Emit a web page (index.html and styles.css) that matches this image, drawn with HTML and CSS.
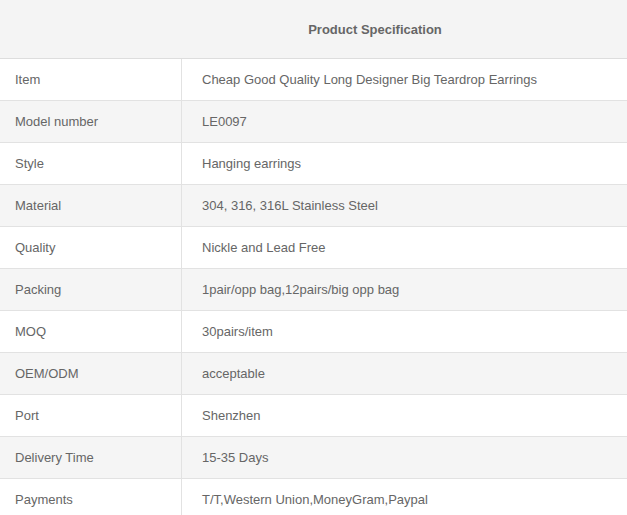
FILE: index.html
```html
<!DOCTYPE html>
<html>
<head>
<meta charset="utf-8">
<link rel="stylesheet" href="styles.css">
</head>
<body>
<table class="spec">
  <thead>
    <tr><th colspan="2">Product Specification</th></tr>
  </thead>
  <tbody>
    <tr><td class="k">Item</td><td class="v">Cheap Good Quality Long Designer Big Teardrop Earrings</td></tr>
    <tr><td class="k">Model number</td><td class="v">LE0097</td></tr>
    <tr><td class="k">Style</td><td class="v">Hanging earrings</td></tr>
    <tr><td class="k">Material</td><td class="v">304, 316, 316L Stainless Steel</td></tr>
    <tr><td class="k">Quality</td><td class="v">Nickle and Lead Free</td></tr>
    <tr><td class="k">Packing</td><td class="v">1pair/opp bag,12pairs/big opp bag</td></tr>
    <tr><td class="k">MOQ</td><td class="v">30pairs/item</td></tr>
    <tr><td class="k">OEM/ODM</td><td class="v">acceptable</td></tr>
    <tr><td class="k">Port</td><td class="v">Shenzhen</td></tr>
    <tr><td class="k">Delivery Time</td><td class="v">15-35 Days</td></tr>
    <tr><td class="k">Payments</td><td class="v">T/T,Western Union,MoneyGram,Paypal</td></tr>
  </tbody>
</table>
</body>
</html>
```
FILE: styles.css
```css
html, body {
  margin: 0;
  padding: 0;
  background: #fff;
  overflow: hidden;
}
.spec {
  width: 100%;
  border-collapse: collapse;
  font-family: "Liberation Sans", Arial, sans-serif;
  font-size: 13px;
  color: #666;
}
.spec th {
  height: 58px;
  padding: 0 0 0 123px;
  background: #f4f4f4;
  font-weight: bold;
  color: #666;
  text-align: center;
  border-bottom: 1px solid #ddd;
}
.spec td {
  height: 41px;
  padding: 0;
  border-bottom: 1px solid #e2e2e2;
  vertical-align: middle;
}
.spec td.k {
  width: 166px;
  padding-left: 15px;
  border-right: 1px solid #e2e2e2;
}
.spec td.v {
  padding-left: 20px;
}
.spec tbody tr:nth-child(even) td {
  background: #f5f5f5;
}
```
